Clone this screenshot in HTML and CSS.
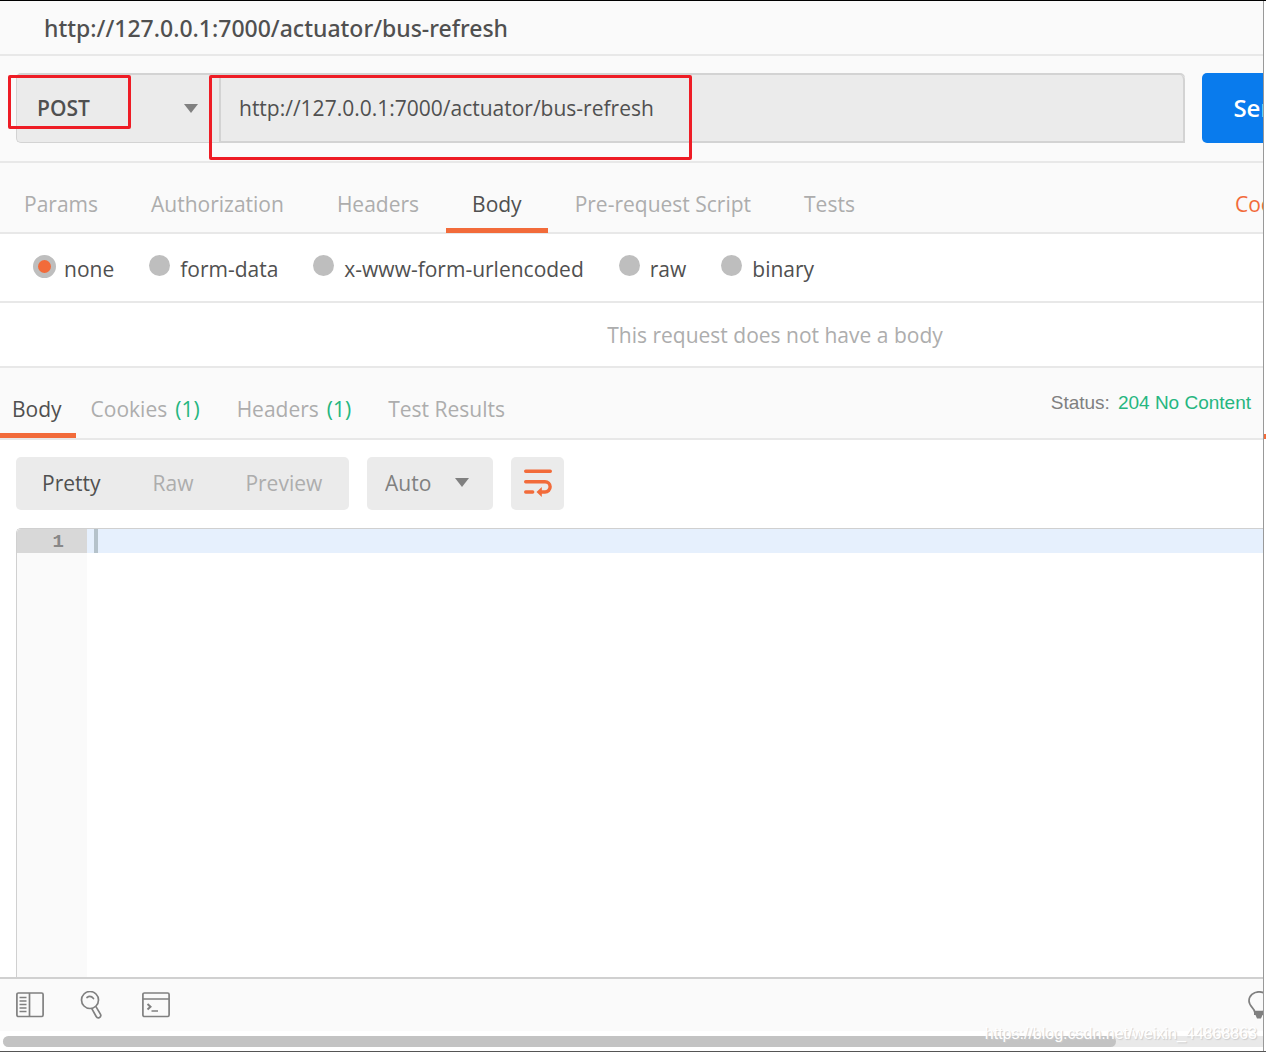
FILE: index.html
```html
<!DOCTYPE html>
<html lang="en">
<head>
<meta charset="utf-8">
<title>bus-refresh</title>
<link rel="stylesheet" href="styles.css">
</head>
<body>
<div class="window">
  <main class="pane">
    <h1 class="title">http://127.0.0.1:7000/actuator/bus-refresh</h1>

    <form class="request">
      <div class="address">
        <div class="method">
          <select class="method-select" aria-label="Method"><option>POST</option><option>GET</option></select>
          <svg class="caret" width="14" height="9" viewBox="0 0 14 9"><path d="M0 0h14L7 9z"/></svg>
        </div>
        <input class="url" type="text" aria-label="Request URL" value="http://127.0.0.1:7000/actuator/bus-refresh">
      </div>
      <button class="send" type="button">Send</button>
      <div class="mark mark-method"></div>
      <div class="mark mark-url"></div>
    </form>

    <nav class="tabs">
      <button class="tab">Params</button>
      <button class="tab">Authorization</button>
      <button class="tab">Headers</button>
      <button class="tab active">Body</button>
      <button class="tab">Pre-request Script</button>
      <button class="tab">Tests</button>
      <a class="cookies" href="#">Cookies</a>
    </nav>

    <div class="modes">
      <label class="mode"><input type="radio" name="mode" checked>none</label>
      <label class="mode"><input type="radio" name="mode">form-data</label>
      <label class="mode"><input type="radio" name="mode">x-www-form-urlencoded</label>
      <label class="mode"><input type="radio" name="mode">raw</label>
      <label class="mode"><input type="radio" name="mode">binary</label>
    </div>

    <div class="empty"><p>This request does not have a body</p></div>

    <div class="response">
      <nav class="response-tabs">
        <button class="rtab active">Body</button>
        <button class="rtab">Cookies<span class="count">(1)</span></button>
        <button class="rtab">Headers<span class="count">(1)</span></button>
        <button class="rtab">Test Results</button>
      </nav>
      <p class="status">Status:<span class="code">204 No Content</span></p>
    </div>

    <div class="toolbar">
      <div class="views">
        <button class="view active">Pretty</button>
        <button class="view">Raw</button>
        <button class="view">Preview</button>
      </div>
      <div class="format">
        <select class="format-select" aria-label="Format"><option>Auto</option><option>JSON</option></select>
        <svg class="caret" width="14" height="9" viewBox="0 0 14 9"><path d="M0 0h14L7 9z"/></svg>
      </div>
      <button class="wrap" aria-label="Wrap lines">
        <svg width="28" height="28" viewBox="0 0 28 28" fill="none" stroke="#f26b3a" stroke-width="3.4" stroke-linecap="round">
          <path d="M1.7 2.2h24.600M1.700 12.700H21a5.100 5.100 0 0 1 0 10.300h-4M1.700 23h7"/>
          <path d="M12.500 23l5.300-5v10z" fill="#f26b3a" stroke="none"/>
        </svg>
      </button>
    </div>

    <div class="editor">
      <div class="gutter"><span class="line-number">1</span></div>
      <div class="code-area"><div class="code-line"><span class="cursor"></span></div></div>
    </div>

    <footer class="statusbar">
      <div class="tools">
        <button class="tool" aria-label="Toggle sidebar">
          <svg width="28" height="28" viewBox="0 0 28 28" fill="none" stroke="#808080" stroke-width="1.7">
            <rect x=".9" y="2" width="26.200" height="23.500" rx="1.500"/>
            <path d="M13.500 2v23.500M3.500 6.500h7M3.500 10h7M3.500 13.500h7M3.500 17h7M3.500 20.500h7"/>
          </svg>
        </button>
        <button class="tool" aria-label="Find">
          <svg width="28" height="28" viewBox="0 0 28 28" fill="none" stroke="#808080" stroke-width="1.700">
            <circle cx="11" cy="9" r="8.500"/>
            <path d="M8 6.500q3.500-2.500 6.500 1" stroke-linecap="round"/>
            <path d="M12.800 17.700l4.400 7.800a2.400 2.400 0 0 0 4.200-2.400l-4.600-7.700"/>
          </svg>
        </button>
        <button class="tool" aria-label="Console">
          <svg width="28" height="28" viewBox="0 0 28 28" fill="none" stroke="#808080" stroke-width="1.700">
            <rect x=".9" y="2" width="26.200" height="23.500" rx="1.500"/>
            <path d="M1 8h26M9.500 20h6.500" />
            <path d="M5.500 13l3 2.700-3 2.800" stroke-width="2"/>
          </svg>
        </button>
      </div>
      <button class="bulb" aria-label="Tips">
        <svg width="22" height="28" viewBox="0 0 22 28" fill="none" stroke="#808080" stroke-width="1.700">
          <path d="M6.500 20.500c0-3-5.500-5.500-5.500-10.500a10 9.200 0 0 1 20 0c0 5-5.500 7.500-5.500 10.500z"/>
          <path d="M6 20.500h10v3.500h-1.500l-1.500 3.500H9L7.500 24H6z" fill="#808080" stroke="none"/>
        </svg>
      </button>
    </footer>
    <div class="scrollbar"><div class="thumb"></div></div>
  </main>
  <div class="edge"></div>
  <div class="watermark">https://blog.csdn.net/weixin_44868863</div>
</div>
</body>
</html>
```
FILE: styles.css
```css
* { box-sizing: border-box; }

body {
  margin: 0;
  font-family: "Open Sans", "Noto Sans", sans-serif;
  font-size: 21px;
  line-height: 30px;
  color: #505050;
  background: #fff;
}

button, select, input {
  margin: 0;
  padding: 0;
  border: 0;
  background: none;
  font: inherit;
  color: inherit;
}

p { margin: 0; }

.window {
  position: relative;
  display: flex;
  min-height: 100vh;
  border-top: 1px solid #000;
  border-bottom: 1px solid #555;
  overflow: hidden;
}

.pane {
  flex: 1;
  min-width: 0;
  display: flex;
  flex-direction: column;
  overflow: hidden;
}

.edge {
  width: 3px;
  border-left: 1px solid #999;
  background: linear-gradient(#fff 433px, #f26b3a 433px, #f26b3a 438px, #fff 438px);
}

.title {
  margin: 0;
  padding: 12px 44px;
  height: 55px;
  font-family: "Noto Sans", "Open Sans", sans-serif;
  font-size: 23px;
  font-weight: 500;
  background: #fafafa;
  border-bottom: 2px solid #e8e8e8;
}

.request {
  position: relative;
  display: flex;
  gap: 17px;
  height: 107px;
  padding: 17px 0 18px 16px;
  background: #fafafa;
  border-bottom: 2px solid #e8e8e8;
}

.address {
  flex: 1;
  display: flex;
  border: 1px solid #d3d3d3;
  border-top-width: 2px;
  border-right: 0;
  border-radius: 5px 5px 0 5px;
  background: #ebebeb;
}

.method {
  display: flex;
  align-items: center;
  width: 202px;
}

.method-select {
  appearance: none;
  width: 167px;
  height: 67px;
  padding: 0 0 2px 20px;
  font-weight: 600;
}

.caret { fill: #808080; pointer-events: none; }

.url {
  flex: 1;
  height: 68px;
  padding: 0 18px;
  border: 2px solid #d3d3d3;
  border-top: 0;
  border-radius: 0 5px 0 0;
}

.send {
  flex: none;
  width: 120px;
  margin-right: -59px;
  border-radius: 5px;
  background: #097bed;
  color: #fff;
  font-size: 24px;
  font-weight: 600;
}

.mark {
  position: absolute;
  border: 3px solid #ee1c25;
  border-radius: 2px;
  pointer-events: none;
}

.mark-method { left: 8px; top: 19px; width: 123px; height: 54px; }
.mark-url { left: 209px; top: 19px; width: 483px; height: 85px; }

.tabs {
  display: flex;
  gap: 1px;
  height: 71px;
  background: #fafafa;
  border-bottom: 2px solid #e8e8e8;
}

.tab {
  margin-bottom: -1px;
  padding: 16px 26px 0;
  color: #adadad;
  border-bottom: 5px solid transparent;
  white-space: nowrap;
}

.tab:first-child { padding-left: 24px; }

.tab.active { color: #505050; border-bottom-color: #f26b3a; }

.cookies {
  flex: none;
  width: 84px;
  margin: 26px -56px 0 auto;
  color: #f26b3a;
  text-decoration: none;
}

.modes {
  display: flex;
  gap: 35px;
  height: 69px;
  padding: 21px 33px 0;
  border-bottom: 2px solid #e8e8e8;
}

.mode {
  display: flex;
  line-height: 28px;
  white-space: nowrap;
}

.mode input {
  appearance: none;
  width: 21px;
  height: 21px;
  margin-right: 10px;
  border-radius: 50%;
  background: #bebebe;
}

.mode input:checked {
  width: 23px;
  height: 23px;
  margin-right: 8px;
  border: 5px solid #bebebe;
  background: #f26b3a;
}

.empty {
  height: 65px;
  margin-right: -287px;
  padding-top: 17px;
  text-align: center;
  color: #adadad;
  border-bottom: 2px solid #e8e8e8;
}

.response {
  display: flex;
  justify-content: space-between;
  height: 72px;
  background: #fafafa;
  border-bottom: 2px solid #e8e8e8;
}

.response-tabs { display: flex; gap: 1px; }

.rtab {
  padding: 17px 22px 0 14px;
  color: #adadad;
  border-bottom: 5px solid transparent;
  white-space: nowrap;
}

.rtab:first-child { padding: 17px 14px 0 12px; }

.rtab.active { color: #505050; border-bottom-color: #f26b3a; }

.count { margin-left: 8px; color: #26b680; }

.status {
  padding: 20px 12px 0 0;
  font-family: "Liberation Sans", sans-serif;
  font-size: 19px;
  color: #808080;
}

.code { margin-left: 8px; color: #26b680; }

.toolbar {
  display: flex;
  gap: 18px;
  padding: 17px 16px 18px;
}

.views, .format, .wrap {
  display: flex;
  align-items: center;
  height: 53px;
  padding-bottom: 2px;
  border-radius: 5px;
  background: #ebebeb;
}

.views { width: 333px; }

.view { padding: 0 26px; color: #adadad; }
.view.active { color: #505050; }

.format { width: 126px; }

.format-select {
  appearance: none;
  width: 88px;
  height: 51px;
  padding-left: 18px;
  color: #808080;
}

.wrap { justify-content: center; width: 53px; }

.editor {
  flex: 1;
  display: flex;
  min-height: 200px;
  margin-left: 16px;
  border: 1px solid #d0d0d0;
  border-width: 1px 0 0 1px;
  border-radius: 5px 0 0 0;
  overflow: hidden;
}

.gutter { width: 70px; background: #fafafa; }

.line-number {
  display: block;
  height: 24px;
  padding-right: 23px;
  background: #d8d8d8;
  color: #888;
  font-family: "Liberation Mono", monospace;
  font-size: 19px;
  font-weight: 700;
  line-height: 26px;
  text-align: right;
}

.code-area { flex: 1; }

.code-line {
  display: flex;
  height: 24px;
  padding-left: 7px;
  background: #e6f0fd;
}

.cursor { width: 4px; background: #b5c2ca; }

.statusbar {
  display: flex;
  justify-content: space-between;
  height: 54px;
  padding: 12px 0 12px 16px;
  background: #fafafa;
  border-top: 2px solid #d0d0d0;
}

.tools { display: flex; gap: 35px; }

.tool, .bulb { height: 28px; }

.tool svg, .bulb svg, .wrap svg { display: block; }

.bulb { margin-right: -7px; }

.scrollbar {
  height: 11px;
  margin: 5px 0 4px 3px;
  border-radius: 6px 0 0 6px;
  background: #e9e9e9;
}

.thumb {
  width: calc(100% - 147px);
  height: 11px;
  border-radius: 6px;
  background: #c3c3c3;
}

.watermark {
  position: absolute;
  right: 9px;
  bottom: 5px;
  font-family: "Liberation Sans", sans-serif;
  font-size: 16px;
  line-height: 24px;
  color: #fff;
  text-shadow: 1px 1px 1px #ccc;
}
```
